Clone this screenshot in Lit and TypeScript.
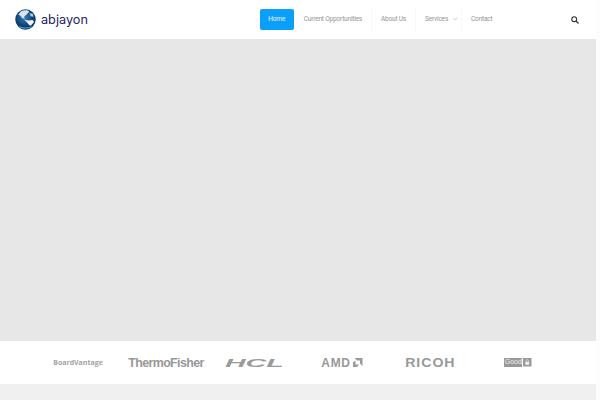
import { LitElement, html, css, svg } from "lit";
import { customElement } from "lit/decorators.js";

@customElement("app-root")
export class AppRoot extends LitElement {
  static styles = css`
    :host { display: block; width: 600px; height: 400px; overflow: hidden; background: #fdfdfd; font-family: Roboto, sans-serif; }
    .page { width: 596px; height: 400px; display: flex; flex-direction: column; background: #f1f0f0; }
    .header { height: 39px; flex: none; background: #fff; display: flex; align-items: center; padding: 0 17.5px 0 15px; box-sizing: border-box; }
    .logo { display: flex; align-items: center; gap: 5px; }
    .logo-text { font-family: Inter, sans-serif; font-size: 12.7px; color: #26235f; }
    .nav { margin-left: auto; display: flex; align-items: center; margin-right: 69.5px; height: 21px; }
    .nav a { font-size: 6.6px; letter-spacing: -0.23px; color: #959595; padding: 0 8.5px 1px 9.5px; box-sizing: border-box; height: 23px; display: flex; align-items: center; border-right: 1px solid #f8f8f8; white-space: nowrap; }
    .nav a.active { background: #0a9ffb; color: #e8f6ff; border-radius: 2px; padding: 0 0 1px; width: 34px; height: 21px; justify-content: center; border: 0; }
    .nav a.first { padding-left: 10px; }
    .nav a.services { padding-right: 3px; }
    .nav a.plain { border-right: 0; }
    .chev { margin-left: 4.5px; }
    .hero { height: 302px; flex: none; background: #e7e7e7; }
    .logos { height: 43px; flex: none; background: #fff; display: grid; grid-template-columns: repeat(6, 88px); padding-left: 34px; align-items: center; justify-items: center; color: #999; }
    .bv { font-family: "Open Sans", sans-serif; font-weight: 700; font-size: 7px; color: #a3a3a3; }
    .tf { font-family: "Liberation Sans", sans-serif; font-weight: 700; font-size: 12.4px; letter-spacing: -0.6px; color: #989898; }
    .amd { font-family: "Liberation Sans", sans-serif; font-weight: 700; font-size: 12px; letter-spacing: 0.7px; display: flex; align-items: center; gap: 1px; }
    .ricoh { font-family: "Liberation Sans", sans-serif; font-weight: 700; font-size: 12px; letter-spacing: 0.8px; transform: scaleX(1.18); }
    .good { display: flex; gap: 1px; align-items: center; }
    .good span { background: #999; color: #f0f0f0; font-family: "Liberation Sans", sans-serif; font-size: 7px; width: 18px; text-align: center; height: 8.5px; line-height: 8.5px; }
    .hcl { font-family: "Liberation Sans", sans-serif; font-weight: 700; font-style: italic; font-size: 11px; transform: scaleX(2.6); color: #9a9a9a; }
    svg { display: block; }
  `;

  private globe() {
    return html`<svg width="21" height="21" viewBox="0 0 22 22">
      <defs>
        <radialGradient id="g" cx="0.45" cy="0.4" r="0.7">
          <stop offset="0" stop-color="#2f7fb6" />
          <stop offset="0.6" stop-color="#103f74" />
          <stop offset="1" stop-color="#0d3261" />
        </radialGradient>
      </defs>
      <circle cx="11" cy="11" r="10.7" fill="url(#g)" />
      ${svg`<path d="M6 2.6 C9 .8 13 .8 15 2.5 L12.5 5.5 L9.5 8 L10 10.5 L7.5 9.5 L5 6.5 L3.5 6 Z" fill="#d9e3ea"/>
      <path d="M9.5 11 L14 12 L18.5 11.5 L20 13.5 L16.5 17.5 L14.5 16.5 L12.5 14 Z" fill="#eef3f5"/>
      <path d="M15 4.5 L18.5 5 L19.5 8 L16.5 7.5 Z" fill="#b9cfdd"/>
      <path d="M3.5 17.5 C7 21.5 15 21.5 18.5 17.5 C15 20 8 20 3.5 17.5Z" fill="#39b0e4"/>`}
    </svg>`;
  }

  render() {
    return html`<div class="page">
      <div class="header">
        <div class="logo">${this.globe()}<span class="logo-text">abjayon</span></div>
        <nav class="nav">
          <a class="active">Home</a>
          <a class="first">Current Opportunities</a>
          <a>About Us</a>
          <a class="services">Services<svg class="chev" width="5" height="4" viewBox="0 0 5 4"><path d="M.7 1l1.8 1.8L4.3 1" fill="none" stroke="#aaa" stroke-width=".7"/></svg></a>
          <a class="plain">Contact</a>
        </nav>
        <svg width="8" height="8" viewBox="0 0 8 8"><circle cx="3.2" cy="3.2" r="2.4" fill="none" stroke="#333" stroke-width="1.1"/><path d="M5 5l2.5 2.5" stroke="#333" stroke-width="1.3"/></svg>
      </div>
      <div class="hero"></div>
      <div class="logos">
        <span class="bv">BoardVantage</span>
        <span class="tf">ThermoFisher</span>
        <span class="hcl">HCL</span>
        <span class="amd">AMD<svg width="11" height="9" viewBox="0 0 11 9"><path d="M2.5 0h8v8L8 5.5V2.5H5Z M1 9V4.5l2.5-2v4h3.5L5 9Z" fill="#999"/></svg></span>
        <span class="ricoh">RICOH</span>
        <span class="good"><span>Good</span><svg width="8.5" height="8.5" viewBox="0 0 9 9"><path d="M0 0h9v9H0Z" fill="#999"/><path d="M2.5 4h4v3.2h-4Z" fill="#f0f0f0"/><path d="M3.3 4V2.9a1.2 1.2 0 0 1 2.4 0V4" fill="none" stroke="#f0f0f0" stroke-width=".7"/></svg></span>
      </div>
    </div>`;
  }
}
